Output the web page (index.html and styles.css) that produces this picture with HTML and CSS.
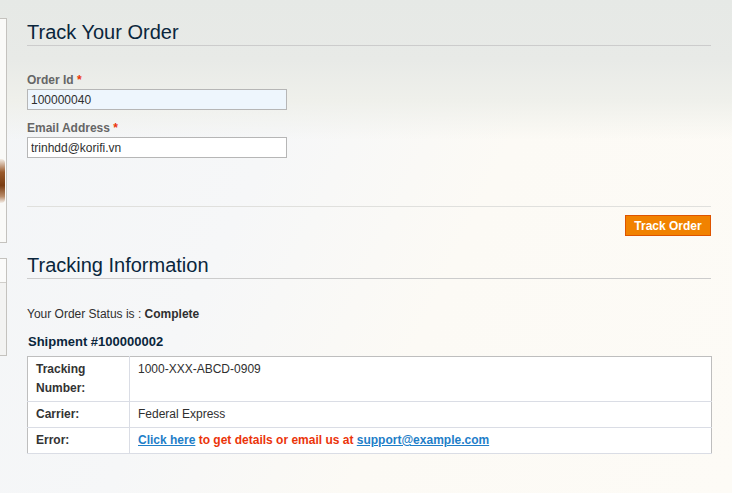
FILE: index.html
```html
<!DOCTYPE html>
<html>
<head>
<meta charset="utf-8">
<link rel="stylesheet" href="styles.css">
</head>
<body>
<div class="page">
  <aside class="sidebar">
    <div class="side-box side-box-photo">
      <div class="photo"></div>
    </div>
    <div class="side-box side-box-list">
      <div class="side-row"></div>
    </div>
  </aside>
  <main class="main">
    <h1 class="page-title">Track Your Order</h1>
    <form class="track-form">
      <div class="field">
        <label class="field-label">Order Id <em class="req">*</em></label>
        <input class="input input-focus" type="text" value="100000040">
      </div>
      <div class="field">
        <label class="field-label">Email Address <em class="req">*</em></label>
        <input class="input" type="text" value="trinhdd@korifi.vn">
      </div>
      <div class="buttons-set">
        <button class="button" type="button">Track Order</button>
      </div>
    </form>
    <h2 class="page-title section-title">Tracking Information</h2>
    <p class="status">Your Order Status is : <strong>Complete</strong></p>
    <h3 class="shipment">Shipment #100000002</h3>
    <table class="tracking-table">
      <tr>
        <th>Tracking<br>Number:</th>
        <td>1000-XXX-ABCD-0909</td>
      </tr>
      <tr>
        <th>Carrier:</th>
        <td>Federal Express</td>
      </tr>
      <tr>
        <th>Error:</th>
        <td class="error-cell"><a href="#">Click here</a> to get details or email us at <a href="#">support@example.com</a></td>
      </tr>
    </table>
  </main>
</div>
</body>
</html>
```

FILE: styles.css
```css
html, body {
  margin: 0;
  padding: 0;
}
body {
  font-family: "Liberation Sans", Arial, sans-serif;
  font-size: 12px;
  color: #2f2f2f;
  height: 493px;
  overflow: hidden;
  background:
    linear-gradient(180deg, #e6e9e6 0px, #e8eae7 60px, #eff0eb 100px, rgba(253,250,243,0) 140px),
    linear-gradient(115deg, #f3f5f7 0%, #f6f7f8 35%, #fcfaf5 60%, #fdfbf6 100%);
}
.page {
  display: flex;
  align-items: flex-start;
  gap: 20px;
}
.sidebar {
  width: 7px;
  flex: none;
  overflow: hidden;
  padding-top: 18px;
  display: flex;
  flex-direction: column;
  gap: 15px;
}
.side-box {
  margin-left: -200px;
  width: 205px;
  border: 1px solid #c4c2be;
  background: #fafaf8;
  flex: none;
}
.side-box-photo {
  height: 223px;
  position: relative;
}
.photo {
  position: absolute;
  right: 1px;
  top: 140px;
  width: 8px;
  height: 44px;
  background: linear-gradient(180deg, #f3ece4 0%, #9a5a2c 30%, #7a3d12 60%, #b98c6a 85%, #f5f0ea 100%);
  border-radius: 0 4px 4px 0;
}
.side-box-list {
  height: 96px;
  background: #f3f3f2;
}
.side-row {
  height: 23px;
  border-bottom: 1px solid #d0ceca;
  background: #fbfbfa;
}
.main {
  width: 684px;
  flex: none;
}
.page-title {
  margin: 20px 0 0;
  font-size: 20px;
  line-height: 24px;
  font-weight: normal;
  color: #0a263c;
  padding-bottom: 1px;
  border-bottom: 1px solid #cccccc;
}
.track-form {
  margin: 0;
  padding-top: 27px;
}
.field {
  display: flex;
  flex-direction: column;
  margin-bottom: 11px;
}
.field-label {
  font-weight: bold;
  color: #666;
  font-size: 12px;
  line-height: 15px;
  margin-bottom: 1px;
}
.req {
  font-style: normal;
  color: #eb340a;
}
.input {
  width: 260px;
  height: 21px;
  box-sizing: border-box;
  border: 1px solid #b6b6b6;
  background: #fff;
  font-family: "Liberation Sans", Arial, sans-serif;
  font-size: 12px;
  color: #2f2f2f;
  padding: 0 3px;
  margin: 0;
}
.input-focus {
  background: #eef6fd;
}
.buttons-set {
  margin-top: 48px;
  border-top: 1px solid #e0e0dd;
  padding-top: 8px;
  display: flex;
  justify-content: flex-end;
}
.button {
  height: 21px;
  width: 86px;
  padding: 0;
  border: 1px solid #de5400;
  background: #f18200;
  color: #fff;
  font-family: "Liberation Sans", Arial, sans-serif;
  font-size: 12px;
  font-weight: bold;
  cursor: pointer;
}
.section-title {
  margin-top: 17px;
}
.status {
  margin: 27px 0 0;
  line-height: 16px;
}
.status strong {
  color: #2f2f2f;
}
.shipment {
  margin: 12px 0 0;
  font-size: 13px;
  line-height: 16px;
  color: #0a263c;
  font-weight: bold;
  padding-left: 1px;
}
.tracking-table {
  margin-top: 6px;
  width: 685px;
  border-collapse: collapse;
  border: 1px solid #bebebe;
  background: #fff;
  font-size: 12px;
}
.tracking-table th,
.tracking-table td {
  text-align: left;
  vertical-align: top;
  padding: 3px 8px 3px 8px;
  line-height: 19px;
  border-bottom: 1px solid #dadde5;
}
.tracking-table th {
  width: 85px;
  font-weight: bold;
  color: #333;
  border-right: 1px solid #dadde5;
}
.tracking-table td {
  color: #2f2f2f;
}
.error-cell {
  color: #eb340a !important;
  font-weight: bold;
}
.error-cell a {
  color: #1e7ec8;
}
```
